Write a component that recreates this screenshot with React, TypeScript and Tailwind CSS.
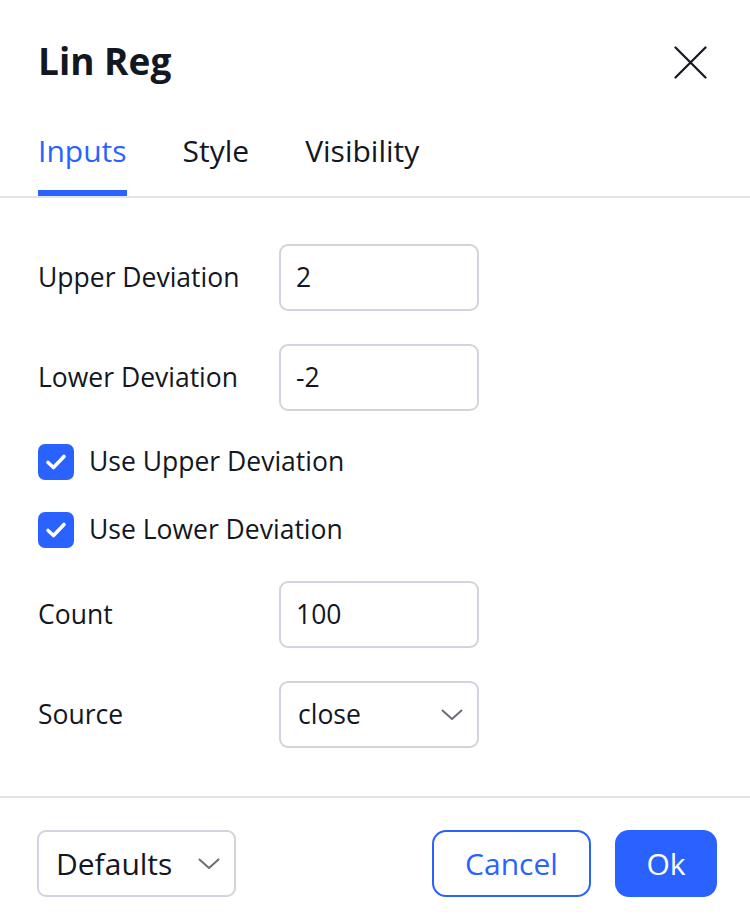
import React, { useState } from "react";

const font = { fontFamily: '"Open Sans", "Noto Sans", sans-serif' };

const Chevron = () => (
  <svg width="22" height="12" viewBox="0 0 22 12" fill="none" className="shrink-0">
    <path d="M1.5 1.5 L11 10 L20.5 1.5" stroke="#6a6d78" strokeWidth="2" strokeLinecap="round" strokeLinejoin="round" />
  </svg>
);

const Check = () => (
  <svg width="22" height="18" viewBox="0 0 22 18" fill="none">
    <path d="M3 9.5 L8.5 14.5 L19 3.5" stroke="#fff" strokeWidth="3.6" strokeLinecap="round" strokeLinejoin="round" />
  </svg>
);

const Field = ({ label, value }: { label: string; value: string }) => (
  <div className="grid grid-cols-[241px_200px] items-center">
    <span className="text-[26.5px] text-[#131722]">{label}</span>
    <div className="h-[67px] rounded-[9px] border-2 border-[#d1d4dc] flex items-center px-[15px] text-[26.5px] text-[#131722]">
      {value}
    </div>
  </div>
);

const CheckRow = ({ label, className = "" }: { label: string; className?: string }) => (
  <div className={"flex items-center gap-[15px] h-[36px] " + className}>
    <div className="w-[36px] h-[36px] rounded-[7px] bg-[#2962ff] flex items-center justify-center">
      <Check />
    </div>
    <span className="text-[26.5px] text-[#131722]">{label}</span>
  </div>
);

export default function App() {
  const [tab, setTab] = useState("Inputs");
  const tabs = ["Inputs", "Style", "Visibility"];

  return (
    <div className="w-[750px] h-[921px] bg-white flex flex-col overflow-hidden" style={font}>
      {/* header */}
      <div className="h-[124px] flex items-center justify-between pl-[38px] pr-[43px]">
        <h1 className="text-[37px] font-bold text-[#131722] leading-none -mt-[3px]">Lin Reg</h1>
        <button className="w-[33px] h-[33px] flex items-center justify-center">
          <svg width="33" height="33" viewBox="0 0 33 33" fill="none">
            <path d="M1.5 1.5 L31.5 31.5 M31.5 1.5 L1.5 31.5" stroke="#131722" strokeWidth="2.2" strokeLinecap="round" />
          </svg>
        </button>
      </div>

      {/* tabs */}
      <div className="flex gap-[56px] px-[38px] border-b-2 border-[#e0e3eb]">
        {tabs.map(t => (
          <button key={t} onClick={() => setTab(t)} className="flex flex-col h-[72px]">
            <span className={"text-[30px] leading-[54px] " + (tab === t ? "text-[#2962ff]" : "text-[#131722]")}>{t}</span>
            <span className={"mt-auto h-[6px] w-full " + (tab === t ? "bg-[#2962ff]" : "bg-transparent")} />
          </button>
        ))}
      </div>

      {/* inputs */}
      <div className="flex flex-col gap-[33px] px-[38px] pt-[46px] pb-[48px] border-b-2 border-[#e0e3eb]">
        <Field label="Upper Deviation" value="2" />
        <Field label="Lower Deviation" value="-2" />
        <CheckRow label="Use Upper Deviation" />
        <CheckRow label="Use Lower Deviation" className="-mt-px" />
        <Field label="Count" value="100" />
        <div className="grid grid-cols-[241px_200px] items-center">
          <span className="text-[26.5px] text-[#131722]">Source</span>
          <div className="h-[67px] rounded-[9px] border-2 border-[#d1d4dc] flex items-center justify-between pl-[17px] pr-[14px] text-[26.5px] text-[#131722]">
            <span>close</span>
            <Chevron />
          </div>
        </div>
      </div>

      {/* footer */}
      <div className="flex items-center justify-between pl-[37px] pr-[33px] pt-[32px]">
        <div className="w-[199px] h-[67px] rounded-[9px] border-2 border-[#d1d4dc] flex items-center justify-between pl-[17px] pr-[14px]">
          <span className="text-[30px] text-[#131722]">Defaults</span>
          <Chevron />
        </div>
        <div className="flex gap-[24px]">
          <button className="w-[159px] h-[67px] rounded-[14px] border-2 border-[#2962ff] text-[#2962ff] text-[30px]">Cancel</button>
          <button className="w-[102px] h-[67px] rounded-[14px] bg-[#2962ff] text-white text-[30px]">Ok</button>
        </div>
      </div>
    </div>
  );
}
